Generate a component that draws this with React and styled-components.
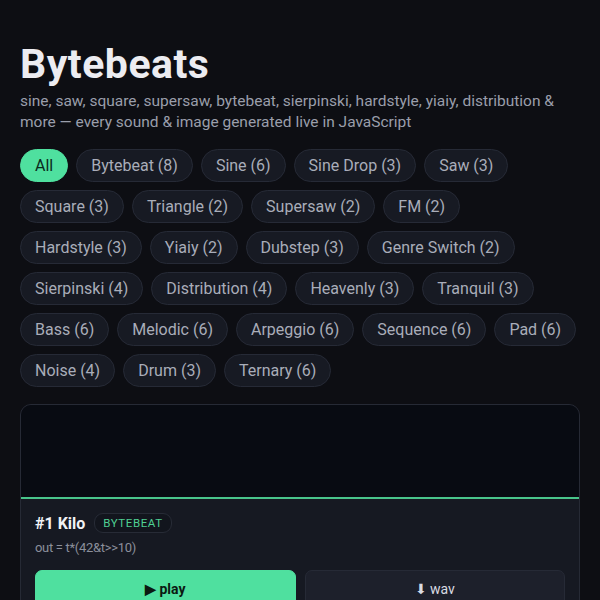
import React from 'react'
import styled, { createGlobalStyle } from 'styled-components'

const categories = [
  { name: 'All', active: true },
  { name: 'Bytebeat', count: 8 },
  { name: 'Sine', count: 6 },
  { name: 'Sine Drop', count: 3 },
  { name: 'Saw', count: 3 },
  { name: 'Square', count: 3 },
  { name: 'Triangle', count: 2 },
  { name: 'Supersaw', count: 2 },
  { name: 'FM', count: 2 },
  { name: 'Hardstyle', count: 3 },
  { name: 'Yiaiy', count: 2 },
  { name: 'Dubstep', count: 3 },
  { name: 'Genre Switch', count: 2 },
  { name: 'Sierpinski', count: 4 },
  { name: 'Distribution', count: 4 },
  { name: 'Heavenly', count: 3 },
  { name: 'Tranquil', count: 3 },
  { name: 'Bass', count: 6 },
  { name: 'Melodic', count: 6 },
  { name: 'Arpeggio', count: 6 },
  { name: 'Sequence', count: 6 },
  { name: 'Pad', count: 6 },
  { name: 'Noise', count: 4 },
  { name: 'Drum', count: 3 },
  { name: 'Ternary', count: 6 },
]

const App = () => {
  return (
    <>
      <GlobalStyle />
      <Page>
        <Title>Bytebeats</Title>
        <Subtitle>
          sine, saw, square, supersaw, bytebeat, sierpinski, hardstyle, yiaiy, distribution &amp; more — every sound &amp; image generated live in JavaScript
        </Subtitle>
        <Filters>
          {categories.map((c) => (
            <Chip key={c.name} $active={c.active}>
              {c.count ? `${c.name} (${c.count})` : c.name}
            </Chip>
          ))}
        </Filters>
        <Card>
          <Canvas />
          <CardBody>
            <CardHeader>
              <TrackName>#1 Kilo</TrackName>
              <Badge>BYTEBEAT</Badge>
            </CardHeader>
            <Code>out = t*(42&amp;t&gt;&gt;10)</Code>
            <Actions>
              <ActionButton $primary>▶ play</ActionButton>
              <ActionButton>⬇ wav</ActionButton>
            </Actions>
          </CardBody>
        </Card>
      </Page>
    </>
  )
}

const GlobalStyle = createGlobalStyle`
  body {
    margin: 0;
    background: #0d0e13;
    font-family: Roboto, "Liberation Sans", sans-serif;
    color: #e8e9ee;
  }
`

const Page = styled.div`
  padding: 42px 20px 0;
  height: 600px;
  box-sizing: border-box;
  overflow: hidden;
`

const Title = styled.h1`
  margin: 0;
  font-size: 41px;
  font-weight: 700;
  line-height: 44px;
  color: #ececf1;
  letter-spacing: 0.5px;
`

const Subtitle = styled.p`
  margin: 5px 0 0;
  font-size: 15.5px;
  line-height: 21px;
  color: #9a9eab;
`

const Filters = styled.div`
  display: flex;
  flex-wrap: wrap;
  gap: 8px;
  max-width: 557px;
  margin-top: 16px;
`

const Chip = styled.button`
  height: 33px;
  padding: 0 14px;
  border-radius: 17px;
  font-family: inherit;
  font-size: 16px;
  cursor: pointer;
  border: 1px solid ${(p) => (p.$active ? '#4fe09f' : '#262a36')};
  background: ${(p) => (p.$active ? '#4fe09f' : '#171a23')};
  color: ${(p) => (p.$active ? '#0b2a1c' : '#a9adb9')};
`

const Card = styled.div`
  margin-top: 17px;
  border: 1px solid #262a35;
  border-radius: 11px;
  overflow: hidden;
  background: #161922;
`

const Canvas = styled.div`
  height: 92px;
  background: #080b12;
  border-bottom: 2px solid #48c58b;
`

const CardBody = styled.div`
  padding: 14px 14px 20px;
`

const CardHeader = styled.div`
  display: flex;
  align-items: center;
  gap: 9px;
`

const TrackName = styled.span`
  font-size: 16px;
  font-weight: 700;
  color: #f1f2f5;
`

const Badge = styled.span`
  padding: 2px 8px;
  border: 1px solid #272b36;
  border-radius: 9px;
  background: #12151d;
  font-size: 11.5px;
  letter-spacing: 0.6px;
  color: #4fcf93;
`

const Code = styled.div`
  margin-top: 7px;
  font-size: 13px;
  color: #8b8f9b;
  letter-spacing: -0.3px;
`

const Actions = styled.div`
  display: grid;
  grid-template-columns: 1fr 1fr;
  gap: 9px;
  margin-top: 15px;
`

const ActionButton = styled.button`
  height: 38px;
  border-radius: 7px;
  font-family: inherit;
  font-size: 14px;
  font-weight: ${(p) => (p.$primary ? 700 : 400)};
  border: 1px solid ${(p) => (p.$primary ? '#4fe09f' : '#262a36')};
  background: ${(p) => (p.$primary ? '#4fe09f' : '#1d202b')};
  color: ${(p) => (p.$primary ? '#0b1a12' : '#d9dbe2')};
`

export default App
